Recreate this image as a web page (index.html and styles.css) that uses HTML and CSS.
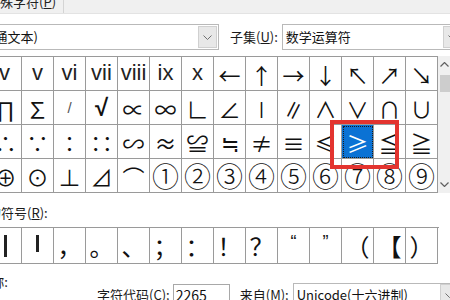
FILE: index.html
```html
<!DOCTYPE html>
<html lang="zh-CN">
<head>
<meta charset="utf-8">
<title>符号</title>
<link rel="stylesheet" href="styles.css">
</head>
<body>
<div class="dlg">
  <div class="tabs"><div class="tab">特殊字符(<u>P</u>)</div></div>

  <div class="fontrow">
    <div class="select font-sel">
      <span class="val">(普通文本)</span>
      <span class="btn"><svg width="9" height="5" viewBox="0 0 9 5"><polyline points="0.5,0.5 4.5,4.5 8.5,0.5" fill="none" stroke="#707070" stroke-width="1"/></svg></span>
    </div>
    <span class="lbl sub-lbl">子集(<u>U</u>):</span>
    <div class="select sub-sel">
      <span class="val">数学运算符</span>
      <span class="btn"><svg width="9" height="5" viewBox="0 0 9 5"><polyline points="0.5,0.5 4.5,4.5 8.5,0.5" fill="none" stroke="#707070" stroke-width="1"/></svg></span>
    </div>
  </div>

  <div class="gridwrap">
    <div class="grid">
      <div class="c rn shift">iv</div><div class="c rn">v</div><div class="c rn">vi</div><div class="c rn">vii</div><div class="c rn">viii</div><div class="c rn">ix</div><div class="c rn">x</div><div class="c">←</div><div class="c">↑</div><div class="c">→</div><div class="c">↓</div><div class="c">↖</div><div class="c">↗</div><div class="c">↘</div>
      <div class="c">∏</div><div class="c">∑</div><div class="c sm">/</div><div class="c rad">√</div><div class="c">∝</div><div class="c">∞</div><div class="c">∟</div><div class="c">∠</div><div class="c">∣</div><div class="c">∥</div><div class="c">∧</div><div class="c">∨</div><div class="c">∩</div><div class="c">∪</div>
      <div class="c">∴</div><div class="c">∵</div><div class="c">∶</div><div class="c">∷</div><div class="c">∽</div><div class="c">≈</div><div class="c">≌</div><div class="c">≒</div><div class="c">≠</div><div class="c">≡</div><div class="c">≤</div><div class="c sel">≥</div><div class="c">≦</div><div class="c">≧</div>
      <div class="c">⊕</div><div class="c">⊙</div><div class="c">⊥</div><div class="c">⊿</div><div class="c">⌒</div><div class="c ci">①</div><div class="c ci">②</div><div class="c ci">③</div><div class="c ci">④</div><div class="c ci">⑤</div><div class="c ci">⑥</div><div class="c ci">⑦</div><div class="c ci">⑧</div><div class="c ci">⑨</div>
    </div>
    <div class="vscroll">
      <span class="arr"><svg width="9" height="5" viewBox="0 0 9 5"><polyline points="0.5,4.5 4.5,0.5 8.5,4.5" fill="none" stroke="#606060" stroke-width="1.2"/></svg></span>
      <div class="thumb"></div>
      <div class="track"></div>
      <span class="arr"><svg width="9" height="5" viewBox="0 0 9 5"><polyline points="0.5,0.5 4.5,4.5 8.5,0.5" fill="none" stroke="#606060" stroke-width="1.2"/></svg></span>
    </div>
  </div>

  <div class="recent-lbl">近期使用过的符号(<u>R</u>):</div>
  <div class="recent">
    <div class="c bar"><span class="b1"></span></div>
    <div class="c bar"><span class="b2"></span></div>
    <div class="c">，</div><div class="c">。</div><div class="c">、</div><div class="c">；</div><div class="c">：</div><div class="c">！</div><div class="c">？</div><div class="c q">“</div><div class="c q">”</div><div class="c">（</div><div class="c">【</div><div class="c">）</div>
  </div>

  <div class="bottom">
    <div class="uname">Unicode 名称:</div>
    <div class="code">
      <span class="lbl">字符代码(<u>C</u>):</span>
      <div class="input">2265</div>
      <span class="lbl from-lbl">来自(<u>M</u>):</span>
      <div class="select from-sel">
        <span class="val">Unicode(十六进制)</span>
        <span class="btn"><svg width="9" height="5" viewBox="0 0 9 5"><polyline points="0.5,0.5 4.5,4.5 8.5,0.5" fill="none" stroke="#707070" stroke-width="1"/></svg></span>
      </div>
    </div>
  </div>
</div>
<div class="mark"></div>
</body>
</html>
```

FILE: styles.css
```css
html, body {
  margin: 0;
  padding: 0;
  background: #ffffff;
  overflow: hidden;
  width: 450px;
  height: 300px;
}
body {
  position: relative;
  font-family: "Noto Sans CJK SC", "Noto Sans", sans-serif;
  font-size: 13px;
  color: #1a1a1a;
}
u { text-decoration: underline; text-underline-offset: 1px; }

.dlg { width: 450px; }

.tabs {
  height: 13px;
  background: #f0f0f0;
  border-bottom: 1px solid #e3e3e3;
  overflow: hidden;
  display: flex;
}
.tab {
  margin-left: -17px;
  margin-top: -5px;
  padding: 0 7px 0 4px;
  line-height: 14px;
  height: 19px;
  border-right: 1px solid #d4d4d4;
  color: #222;
  white-space: nowrap;
}

.fontrow {
  margin-top: 10px;
  height: 26px;
  display: flex;
  align-items: center;
  white-space: nowrap;
}
.select {
  box-sizing: border-box;
  height: 26px;
  border: 1px solid #b9b9b9;
  background: #fff;
  display: flex;
  align-items: center;
  justify-content: space-between;
  flex-shrink: 0;
}
.select .val { padding-left: 3px; line-height: 20px; color: #111; }
.select .btn {
  box-sizing: border-box;
  width: 19px;
  height: 22px;
  margin-right: 1px;
  background: #e8e8e8;
  border: 1px solid #d0d0d0;
  display: flex;
  align-items: center;
  justify-content: center;
}
.font-sel { margin-left: -27px; width: 246px; }
.lbl { line-height: 20px; color: #1a1a1a; flex-shrink: 0; }
.sub-lbl { margin-left: 11px; margin-right: 4px; }
.sub-sel { width: 182px; }

.gridwrap {
  margin-top: 6px;
  display: flex;
  align-items: stretch;
}
.grid {
  margin-left: -11px;
  flex-shrink: 0;
  display: grid;
  grid-template-columns: repeat(14, 32px);
  grid-auto-rows: 34px;
  border-top: 1px solid #9a9a9a;
  border-left: 1px solid #9a9a9a;
}
.c {
  box-sizing: border-box;
  border-right: 1px solid #9a9a9a;
  border-bottom: 1px solid #9a9a9a;
  display: flex;
  align-items: center;
  justify-content: center;
  font-family: "Noto Sans CJK SC", sans-serif;
  font-size: 22px;
  line-height: 1;
  color: #111;
  overflow: hidden;
  white-space: nowrap;
}
.c.rn {
  font-family: "Liberation Sans", Arial, sans-serif;
  font-size: 22px;
  padding-bottom: 2px;
  color: #222;
}
.c.rn.shift { padding-right: 7px; }
.c.sm { font-family: "Liberation Sans", Arial, sans-serif; font-size: 15px; color: #555; }
.c.rad { font-family: "Liberation Sans", Arial, sans-serif; font-size: 24px; font-weight: bold; }
.c.ci { font-size: 27px; font-weight: 300; }
.c.sel {
  background: #0b72d4;
  color: #fff;
  outline: 1px dotted #1b1b1b;
  outline-offset: -2px;
}

.vscroll {
  width: 17px;
  flex-shrink: 0;
  background: #f0f0f0;
  display: flex;
  flex-direction: column;
  align-items: stretch;
}
.vscroll .arr {
  height: 17px;
  display: flex;
  align-items: center;
  justify-content: center;
  padding-right: 5px;
}
.vscroll .thumb {
  margin: 2px 5px 0 2px;
  height: 17px;
  background: #cdcdcd;
}
.vscroll .track { flex: 1; }

.recent-lbl {
  margin-top: 10px;
  margin-left: -77px;
  line-height: 20px;
  white-space: nowrap;
}
.recent {
  margin-top: 4px;
  margin-left: -11px;
  display: grid;
  grid-template-columns: repeat(14, 32px);
  grid-auto-rows: 36px;
  border-top: 1px solid #9a9a9a;
  border-left: 1px solid #9a9a9a;
  width: 449px;
}
.recent .c { font-size: 24px; }
.recent .c.q { font-family: "Liberation Sans", Arial, sans-serif; font-size: 18px; padding-bottom: 8px; }
.bar .b1 { display: block; width: 3px; height: 22px; background: #222; }
.bar .b2 { display: block; width: 3px; height: 17px; background: #222; margin-top: -5px; }

.bottom {
  margin-top: 10px;
  display: flex;
  align-items: flex-start;
  white-space: nowrap;
}
.uname {
  margin-left: -80px;
  width: 88px;
  text-align: right;
  line-height: 16px;
  flex-shrink: 0;
}
.code {
  margin-left: 89px;
  margin-top: 9px;
  display: flex;
  align-items: center;
}
.input {
  box-sizing: border-box;
  margin-left: 3px;
  width: 57px;
  height: 23px;
  border: 1px solid #a8a8a8;
  padding-left: 2px;
  font-size: 14px;
  line-height: 21px;
  color: #111;
}
.from-lbl { margin-left: 10px; margin-right: 4px; }
.from-sel { width: 168px; height: 24px; }

.mark {
  position: absolute;
  left: 330px;
  top: 120px;
  width: 69px;
  height: 49px;
  box-sizing: border-box;
  border: 4px solid #e3342f;
}
```
